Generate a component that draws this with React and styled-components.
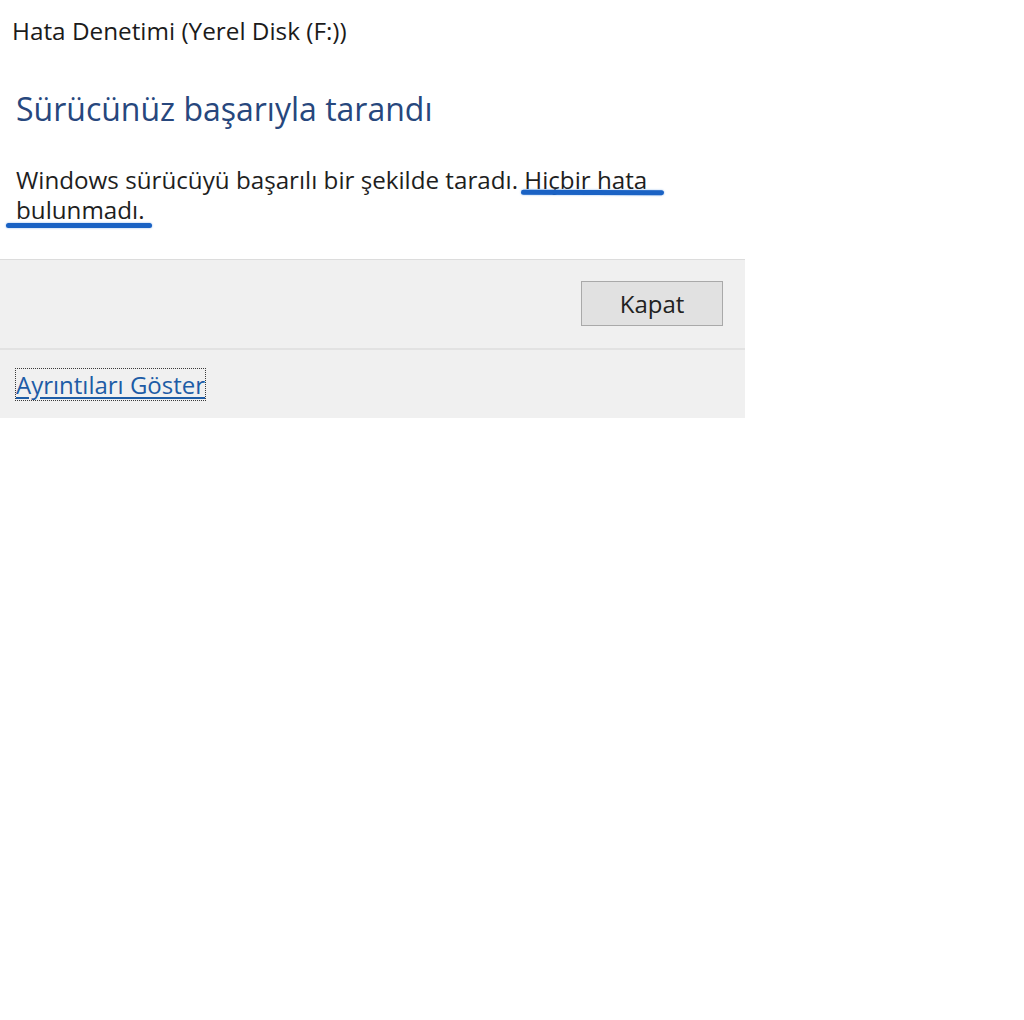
import React from "react";
import styled, { createGlobalStyle } from "styled-components";

const GlobalStyle = createGlobalStyle`
  html, body {
    margin: 0;
    padding: 0;
    background: #ffffff;
  }
  body {
    font-family: "Open Sans", "Noto Sans", "Liberation Sans", sans-serif;
    -webkit-font-smoothing: antialiased;
  }
`;

const Dialog = styled.div`
  width: 745px;
  background: #ffffff;
`;

const Caption = styled.div`
  padding: 16px 12px 0 12px;
  height: 44px;
  font-size: 24.3px;
  line-height: 30px;
  color: #1b1b1b;
`;

const Body = styled.div`
  padding: 29px 16px 0 16px;
  height: 170px;
`;

const Heading = styled.h1`
  margin: 0;
  font-weight: 400;
  font-size: 32px;
  line-height: 40px;
  color: #27477d;
`;

const Message = styled.p`
  margin: 36px 0 0 0;
  font-size: 24.2px;
  line-height: 30px;
  color: #1e1e1e;
`;

/* hand-drawn marker stroke under a phrase */
const Marked = styled.span`
  position: relative;
  &::after {
    content: "";
    position: absolute;
    left: ${(p) => p.$left}px;
    right: ${(p) => p.$right}px;
    bottom: ${(p) => p.$bottom}px;
    height: 5px;
    border-radius: 3px;
    background: #1a62c4;
    box-shadow: 0 0 2px rgba(40, 120, 220, 0.6);
    transform: rotate(${(p) => p.$tilt}deg);
  }
`;

const Footer = styled.div`
  background: #f0f0f0;
  border-top: 1px solid #dcdcdc;
`;

const ButtonRow = styled.div`
  display: flex;
  justify-content: flex-end;
  padding: 21px 22px 22px 0;
  border-bottom: 2px solid #e2e2e2;
`;

const Button = styled.button`
  width: 142px;
  height: 45px;
  border: 1px solid #a9a9a9;
  background: #e1e1e1;
  font-family: inherit;
  font-size: 24px;
  color: #222222;
  padding: 0;
`;

const DetailsRow = styled.div`
  height: 68px;
  display: flex;
  align-items: center;
  padding-left: 16px;
  background: #f0f0f0;
`;

const DetailsLink = styled.a`
  font-size: 24px;
  line-height: 31px;
  color: #1d5ca6;
  text-decoration: underline;
  text-underline-offset: 3px;
  outline: 1px dotted #3a3a3a;
  outline-offset: 0;
  cursor: pointer;
`;

export default function App() {
  return (
    <>
      <GlobalStyle />
      <Dialog>
        <Caption>Hata Denetimi (Yerel Disk (F:))</Caption>
        <Body>
          <Heading>Sürücünüz başarıyla tarandı</Heading>
          <Message>
            Windows sürücüyü başarılı bir şekilde taradı.{" "}
            <Marked $left={-3} $right={-17} $bottom={1} $tilt={0.3}>
              Hiçbir hata
            </Marked>
            <br />
            <Marked $left={-10} $right={-7} $bottom={-2} $tilt={0}>
              bulunmadı.
            </Marked>
          </Message>
        </Body>
        <Footer>
          <ButtonRow>
            <Button>Kapat</Button>
          </ButtonRow>
          <DetailsRow>
            <DetailsLink>Ayrıntıları Göster</DetailsLink>
          </DetailsRow>
        </Footer>
      </Dialog>
    </>
  );
}
